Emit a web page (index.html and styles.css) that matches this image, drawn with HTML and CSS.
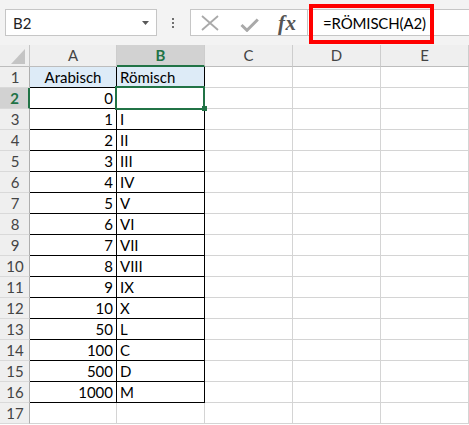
FILE: index.html
```html
<!DOCTYPE html>
<html lang="de">
<head>
<meta charset="utf-8">
<title>RÖMISCH</title>
<link rel="stylesheet" href="styles.css">
</head>
<body>
<div class="app">
  <div class="toolbar">
    <div class="namebox">
      <span>B2</span>
      <svg class="caret" width="7" height="4" viewBox="0 0 7 4"><polygon points="0,0 7,0 3.5,4" fill="#595959"/></svg>
    </div>
    <div class="dots"><i></i><i></i><i></i></div>
    <div class="fbar">
      <div class="fbtns">
        <svg class="ico-x" width="18" height="16" viewBox="0 0 18 16"><path d="M1 1 L17 15 M17 1 L1 15" stroke="#a9a9a9" stroke-width="1.8" fill="none"/></svg>
        <svg class="ico-check" width="19" height="14" viewBox="0 0 19 14"><path d="M1.5 7 L7 12.3 L17.8 1.5" stroke="#a9a9a9" stroke-width="3" fill="none"/></svg>
        <span class="fx">fx</span>
      </div>
      <div class="finput">=RÖMISCH(A2)</div>
    </div>
    <div class="highlight"></div>
  </div>

  <div class="sheet">
    <div class="grid">
      <div class="corner"><svg width="14" height="15" viewBox="0 0 14 15"><polygon points="14,0 14,15 0,15" fill="#c4c4c4"/></svg></div>
      <div class="ch">A</div>
      <div class="ch ch-sel">B</div>
      <div class="ch">C</div>
      <div class="ch">D</div>
      <div class="ch">E</div>

      <div class="rh">1</div>
      <div class="c t hd center">Arabisch</div>
      <div class="c t hd left">Römisch</div>
      <div class="c"></div><div class="c"></div><div class="c"></div>

      <div class="rh rh-sel">2</div>
      <div class="c t num">0</div>
      <div class="c t left"></div>
      <div class="c"></div><div class="c"></div><div class="c"></div>

      <div class="rh">3</div>
      <div class="c t num">1</div><div class="c t left">I</div>
      <div class="c"></div><div class="c"></div><div class="c"></div>

      <div class="rh">4</div>
      <div class="c t num">2</div><div class="c t left">II</div>
      <div class="c"></div><div class="c"></div><div class="c"></div>

      <div class="rh">5</div>
      <div class="c t num">3</div><div class="c t left">III</div>
      <div class="c"></div><div class="c"></div><div class="c"></div>

      <div class="rh">6</div>
      <div class="c t num">4</div><div class="c t left">IV</div>
      <div class="c"></div><div class="c"></div><div class="c"></div>

      <div class="rh">7</div>
      <div class="c t num">5</div><div class="c t left">V</div>
      <div class="c"></div><div class="c"></div><div class="c"></div>

      <div class="rh">8</div>
      <div class="c t num">6</div><div class="c t left">VI</div>
      <div class="c"></div><div class="c"></div><div class="c"></div>

      <div class="rh">9</div>
      <div class="c t num">7</div><div class="c t left">VII</div>
      <div class="c"></div><div class="c"></div><div class="c"></div>

      <div class="rh">10</div>
      <div class="c t num">8</div><div class="c t left">VIII</div>
      <div class="c"></div><div class="c"></div><div class="c"></div>

      <div class="rh">11</div>
      <div class="c t num">9</div><div class="c t left">IX</div>
      <div class="c"></div><div class="c"></div><div class="c"></div>

      <div class="rh">12</div>
      <div class="c t num">10</div><div class="c t left">X</div>
      <div class="c"></div><div class="c"></div><div class="c"></div>

      <div class="rh">13</div>
      <div class="c t num">50</div><div class="c t left">L</div>
      <div class="c"></div><div class="c"></div><div class="c"></div>

      <div class="rh">14</div>
      <div class="c t num">100</div><div class="c t left">C</div>
      <div class="c"></div><div class="c"></div><div class="c"></div>

      <div class="rh">15</div>
      <div class="c t num">500</div><div class="c t left">D</div>
      <div class="c"></div><div class="c"></div><div class="c"></div>

      <div class="rh">16</div>
      <div class="c t num">1000</div><div class="c t left">M</div>
      <div class="c"></div><div class="c"></div><div class="c"></div>

      <div class="rh">17</div>
      <div class="c"></div><div class="c"></div>
      <div class="c"></div><div class="c"></div><div class="c"></div>
    </div>
    <div class="selection"></div>
    <div class="handle"></div>
  </div>
</div>
</body>
</html>
```

FILE: styles.css
```css
* { box-sizing: border-box; }
html, body {
  margin: 0;
  padding: 0;
  background: #ffffff;
}
body {
  width: 469px;
  height: 425px;
  overflow: hidden;
  font-family: Lato, "Liberation Sans", sans-serif;
  color: #000;
}
.app {
  width: 469px;
  height: 425px;
  background: #ffffff;
}

/* ---------- toolbar ---------- */
.toolbar {
  position: relative;
  height: 45px;
  background: #f3f3f3;
  display: flex;
  align-items: flex-start;
  padding: 9px 0 0 5px;
}
.namebox {
  width: 152px;
  height: 27px;
  background: #fff;
  border: 1px solid #c6c6c6;
  display: flex;
  align-items: center;
  justify-content: space-between;
  padding: 0 7px 0 7px;
  font-size: 15px;
  color: #222;
}
.namebox span { padding-top: 1px; }
.caret { display: block; margin-top: 1px; }
.dots {
  margin-left: 15px;
  height: 27px;
  display: flex;
  flex-direction: column;
  justify-content: center;
  gap: 2px;
}
.dots i {
  display: block;
  width: 2px;
  height: 2px;
  background: #6f6f6f;
}
.fbar {
  margin-left: 16px;
  flex: 1;
  height: 27px;
  background: #fff;
  border: 1px solid #c6c6c6;
  border-right: none;
  display: flex;
}
.fbtns {
  width: 117px;
  border-right: 1px solid #c6c6c6;
  display: flex;
  align-items: center;
  padding-left: 10px;
}
.ico-x { display: block; margin-top: 1px; }
.ico-check { display: block; margin-left: 21px; margin-top: 4px; }
.fx {
  margin-left: 19px;
  font-family: "Liberation Serif", serif;
  font-style: italic;
  font-weight: bold;
  font-size: 21px;
  line-height: 20px;
  color: #555555;
  letter-spacing: 0.5px;
}
.finput {
  flex: 1;
  padding-left: 15px;
  padding-top: 2px;
  font-size: 15px;
  letter-spacing: -0.15px;
  line-height: 23px;
  color: #000;
  white-space: nowrap;
}
.highlight {
  position: absolute;
  left: 309px;
  top: 4px;
  width: 125px;
  height: 40px;
  border: 4px solid #ff0000;
}

/* ---------- sheet ---------- */
.sheet { position: relative; }
.grid {
  display: grid;
  grid-template-columns: 30px 87px 88px 88px 88px 88px;
  grid-template-rows: 22px repeat(17, 21px);
  font-size: 15px;
  line-height: 20px;
}
.corner {
  background: #efefef;
  border-right: 1px solid #c6c6c6;
  border-bottom: 1px solid #bdbdbd;
  display: flex;
  align-items: flex-end;
  justify-content: flex-end;
  padding: 0 4px 2px 0;
}
.corner svg { display: block; }
.ch {
  background: #efefef;
  border-right: 1px solid #cdcdcd;
  border-bottom: 1px solid #bdbdbd;
  text-align: center;
  color: #444;
}
.ch-sel {
  background: #d2d2d2;
  color: #217346;
  font-weight: bold;
  border-bottom: 2px solid #217346;
}
.rh {
  background: #efefef;
  border-right: 1px solid #aeaeae;
  border-bottom: 1px solid #d9d9d9;
  text-align: center;
  color: #444;
  padding-left: 1px;
}
.rh-sel {
  background: #d2d2d2;
  color: #217346;
  font-weight: bold;
  border-right: 2px solid #217346;
}
.c {
  border-right: 1px solid #d4d4d4;
  border-bottom: 1px solid #d4d4d4;
  white-space: nowrap;
}
.t {
  border-right-color: #000;
  border-bottom-color: #000;
}
.hd { background: #ddebf7; }
.center { text-align: center; }
.left { text-align: left; padding-left: 3px; }
.num { text-align: right; padding-right: 3px; }

.selection {
  position: absolute;
  left: 115px;
  top: 41px;
  width: 90px;
  height: 24px;
  border: 2px solid #217346;
}
.handle {
  position: absolute;
  left: 202px;
  top: 61px;
  width: 5px;
  height: 5px;
  background: #217346;
}
```
